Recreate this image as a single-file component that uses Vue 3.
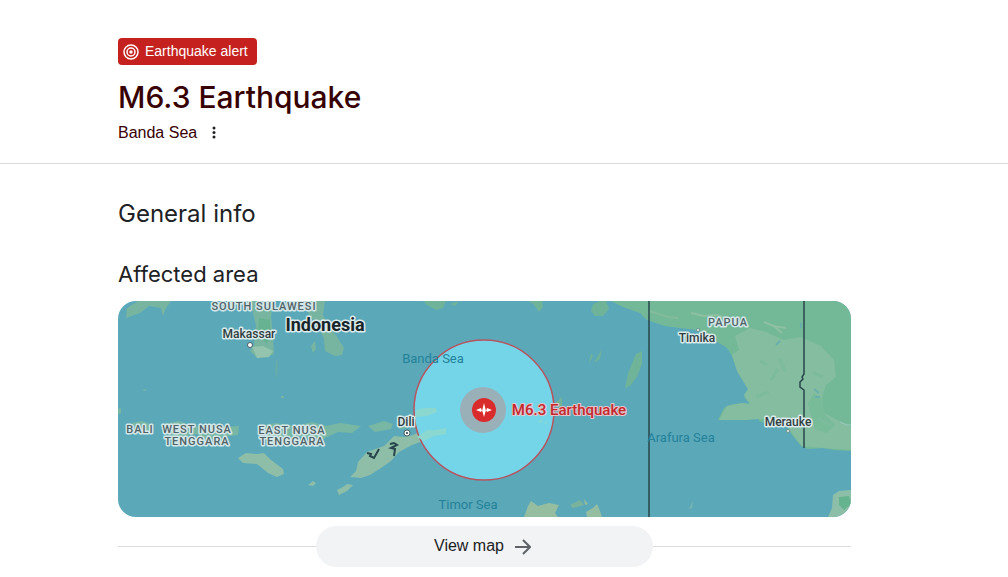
<script setup>
import { ref } from "vue";

const alert = ref({
  type: "Earthquake alert",
  title: "M6.3 Earthquake",
  place: "Banda Sea",
});

/**
 * Place names, in map units
 */
const labels = [
  { text: "SOUTH SULAWESI", x: 146, y: 9, kind: "region" },
  { text: "Makassar", x: 131, y: 37, kind: "city" },
  { text: "Indonesia", x: 207, y: 30, kind: "country" },
  { text: "Banda Sea", x: 315, y: 62, kind: "sea" },
  { text: "BALI", x: 22, y: 132, kind: "region" },
  { text: "WEST NUSA", x: 79, y: 132, kind: "region" },
  { text: "TENGGARA", x: 79, y: 144, kind: "region" },
  { text: "EAST NUSA", x: 174, y: 133, kind: "region" },
  { text: "TENGGARA", x: 174, y: 144, kind: "region" },
  { text: "Dili", x: 288, y: 125, kind: "city" },
  { text: "Timor Sea", x: 350, y: 208, kind: "sea" },
  { text: "Arafura Sea", x: 563, y: 141, kind: "sea" },
  { text: "PAPUA", x: 610, y: 25, kind: "region" },
  { text: "Timika", x: 579, y: 41, kind: "city" },
  { text: "Merauke", x: 670, y: 125, kind: "city" },
];
</script>

<template>
  <main>
    <header class="header">
      <div class="content">
        <div class="badge">
          <svg class="badge-icon" viewBox="0 0 16 16" aria-hidden="true">
            <circle cx="8" cy="8" r="7" />
            <circle cx="8" cy="8" r="4" />
            <circle cx="8" cy="8" r="1" />
          </svg>
          <span>{{ alert.type }}</span>
        </div>
        <h1>{{ alert.title }}</h1>
        <div class="place">
          <span>{{ alert.place }}</span>
          <button class="more" type="button" aria-label="More options">
            <svg viewBox="0 0 4 14" aria-hidden="true">
              <circle cx="2" cy="2" r="1.5" />
              <circle cx="2" cy="6.5" r="1.5" />
              <circle cx="2" cy="11" r="1.5" />
            </svg>
          </button>
        </div>
      </div>
    </header>

    <section class="content">
      <h2>General info</h2>
      <h3>Affected area</h3>

      <svg class="map" viewBox="0 0 733 216" role="img" aria-label="Map of the affected area">
        <rect width="733" height="216" fill="#5ba8b9" />

        <!-- Borneo and Sulawesi -->
        <g fill="#78b5a0">
          <path d="M8 17 L9 7 L17 2 L20 0 H53 L48 7 L45 15 L43 7 L31 5 L22 12 Z" />
          <path d="M133 0 H156 L153 15 L155 34 L156 53 L148 56 L139 57 L132 50 L136 44 L138 25 L135 12 Z" />
          <path d="M188 0 H207 L205 14 L212 27 L218 34 L226 47 L224 54 L217 55 L207 50 L206 38 L200 25 L191 14 Z" />
          <path d="M193 45 L197 40 L198 48 L195 52 Z" />
        </g>
        <path d="M158 58 L160 60 L159 78 L157 72 Z" fill="#66adaa" />
        <path d="M134 46 L145 45 L155 50 L151 56 L139 57 Z" fill="#94c4ad" />
        <path d="M141 17 L152 19 L153 33 L149 43 L140 34 Z" fill="#67b291" />

        <!-- Maluku islands -->
        <g fill="#6fb399">
          <path d="M305 0 H328 L325 7 L318 9 L309 4 Z M332 3 L341 0 L337 5 Z" />
          <path d="M411 0 H424 L425 6 L421 11 L416 4 Z M475 3 L482 0 H488 L491 8 L485 15 L477 15 L473 10 Z" />
          <path d="M518 53 L524 50 V63 L519 76 L512 85 L507 87 L510 72 Z" />
          <path d="M471 63 L473 52 L475 55 Z M476 62 L484 48 L482 58 Z M438 101 L444 96 V106 L439 106 Z" />
        </g>

        <!-- Lesser Sunda islands -->
        <g fill="#78b7a4">
          <path d="M0 108 L3 107 V112 L0 113 Z M14 122 L24 120 L34 124 L29 132 L22 134 Z" />
          <path d="M45 123 L61 120 L76 126 L92 123 L109 126 L121 125 L120 134 L104 136 L91 140 L78 133 L60 137 L46 132 Z" />
          <path d="M139 125 L158 122 L178 125 L194 121 L208 125 L222 122 L243 125 L234 132 L220 131 L203 139 L178 135 L159 138 L144 133 Z" />
          <path d="M250 125 L266 120 L275 123 L273 128 L257 131 Z M280 124 L291 121 L290 127 L281 128 Z" />
          <path d="M24 89 L29 88 L27 90 Z M163 95 H166 V97 H163 Z" />
        </g>
        <g fill="#8fbea8">
          <path d="M120 157 L128 152 L139 153 L146 152 L153 159 L165 168 L166 173 L159 176 L150 172 L139 163 L125 162 Z" />
          <path d="M190 184 L195 180 L198 182 L195 185 Z M219 189 L225 186 L229 183 L235 184 L229 190 L221 194 Z" />
          <path d="M232 176 L238 170 L240 161 L249 151 L266 145 L276 135 L286 136 L295 134 L304 130 L325 128 L308 139 L294 144 L281 151 L273 160 L263 167 L252 174 L243 177 Z" />
        </g>

        <!-- Australia -->
        <g fill="#95bea1">
          <path d="M406 216 L410 205 L413 200 L420 205 L431 202 L441 204 L437 212 L440 216 Z" />
          <path d="M469 216 L468 211 L475 207 L479 203 L482 210 L484 216 Z M466 198 L470 203 L467 204 Z" />
          <path d="M571 208 L575 200 L574 207 Z" fill="#79b5b2" />
        </g>
        <path d="M452 204 L462 199 L466 204 L455 207 Z" fill="#79b39b" />
        <path d="M710 216 L714 207 L715 194 L721 190 L733 189 V216 Z" fill="#8dbfa8" />
        <path d="M721 196 L731 195 L733 203 L726 209 L721 204 Z" fill="#65b48f" />

        <!-- New Guinea -->
        <path
          d="M493 0 H733 V150 L716 149 L705 147 L690 148 L683 145 L674 134 L669 124 L642 121 L638 114 L629 119 L600 119 L606 107 L611 104 L624 102 L632 103 L626 96 L630 88 L620 72 L614 55 L609 47 L596 39 L579 29 L562 27 L547 25 L529 19 L522 12 L505 6 Z"
          fill="#73b997"
        />
        <path
          d="M617 35 L632 27 L648 31 L665 39 L683 36 L703 45 L716 59 L718 76 L708 84 L704 96 L706 112 L733 126 V149 L704 147 L684 145 L672 130 L666 118 L641 118 L629 119 L601 119 L609 105 L624 102 L632 103 L626 94 L630 88 L619 70 L614 54 L621 49 Z"
          fill="#84bda0"
        />
        <path d="M690 102 L696 92 L704 98 L706 112 L717 124 L709 132 L697 128 Z" fill="#78bb99" />
        <g fill="none" stroke="#8fc0a3" stroke-width="2">
          <path d="M573 12 L586 15 L599 14 L613 19 L626 19 M646 21 L656 25 L664 32 M655 25 L668 27" />
          <path d="M531 10 L550 16 L560 17" stroke="#83bc9c" />
        </g>
        <path
          d="M653 79 L660 68 M662 58 L667 70 M642 60 L649 64 M695 72 L705 76 M638 96 L651 91 M700 117 L714 124"
          fill="none"
          stroke="#7dbb9d"
          stroke-width="3"
        />
        <path
          d="M658 44 L662 40 M696 88 L701 92 M683 22 V27 M697 96 L702 96"
          fill="none"
          stroke="#69afae"
          stroke-width="2"
        />
        <path d="M722 121 L729 124 H733" fill="none" stroke="#9dc9bb" />

        <!-- Borders -->
        <g fill="none" stroke="#27464b" stroke-width="1.5">
          <path d="M531 0 V216" />
          <path d="M686 0 V73 L684 76 L685 78 L682 81 V86 L686 89 V147" />
          <path
            d="M249 152 L253 153 L252 155 L256 157 L261 148 M272 143 L276 142 L279 144 L273 147 L277 148 L276 155"
            stroke-width="2"
          />
        </g>

        <!-- Affected circle -->
        <circle cx="366" cy="109" r="70" fill="#74d5e8" stroke="#b9535f" stroke-width="1.5" />
        <g fill="#8bd8d1">
          <path d="M298 109 L306 107 L318 107 L319 111 L309 115 L297 116 Z" />
          <path d="M299 136 L309 129 L318 129 L328 127 L328 133 L316 135 L306 140 Z" />
          <path d="M420 121 L425 118 L423 122 Z M426 122 L430 119 L428 123 Z" />
        </g>
        <circle cx="365" cy="109" r="23" fill="#9ab0b9" />
        <circle cx="366" cy="109" r="12" fill="#d92b2c" />
        <path
          d="M358 109 L363 107 L364 110 L366 102 L368 110 L369 107 L374 109 L369 111 L368 109 L366 116 L364 109 L363 111 Z"
          fill="#fff"
        />

        <g fill="#fff" stroke="#4c5c60">
          <circle cx="132" cy="44" r="2.5" />
          <circle cx="289" cy="132" r="3" />
          <circle cx="580" cy="29" r="1.5" stroke="#6c9186" />
          <circle cx="670" cy="130" r="1.5" stroke="#6c9186" />
        </g>
        <circle cx="289" cy="132" r="1" fill="#26383c" />

        <text
          v-for="(label, index) in labels"
          :key="index"
          :x="label.x"
          :y="label.y"
          :class="['label', label.kind]"
        >
          {{ label.text }}
        </text>
        <text x="451" y="114" class="label quake">{{ alert.title }}</text>
      </svg>

      <div class="view-row">
        <button class="view-map" type="button">
          <span>View map</span>
          <svg viewBox="0 0 16 16" aria-hidden="true">
            <path d="M0 8 H15 M8 1 L15 8 L8 15" />
          </svg>
        </button>
      </div>
    </section>
  </main>
</template>

<style>
body {
  background-color: #fff;
}
</style>

<style scoped>
main {
  color: #202124;
  font-family: "Liberation Sans", Arial, sans-serif;
  font-size: 16px;
}

.content {
  max-width: 733px;
  padding: 0 118px;
}

.header {
  padding: 38px 0 20px;
  border-bottom: 1px solid #dadce0;
  color: #370003;
}

.badge {
  display: inline-flex;
  align-items: center;
  gap: 6px;
  box-sizing: border-box;
  height: 27px;
  padding: 0 9px 2px 5px;
  border-radius: 4px;
  background-color: #c5221f;
  color: #fff;
  font-size: 14px;
}

.badge-icon {
  width: 16px;
  height: 16px;
  margin-top: 2px;
  fill: none;
  stroke: #fff;
  stroke-width: 1.5;
}

h1,
h2,
h3 {
  margin: 0;
  font-family: "Google Sans", Inter, sans-serif;
  font-weight: 400;
}

h1 {
  padding-top: 12px;
  font-size: 30px;
  font-weight: 500;
  line-height: 40px;
}

.place {
  display: flex;
  align-items: center;
  gap: 11px;
  padding-top: 6px;
  line-height: 20px;
}

.more {
  display: flex;
  justify-content: center;
  width: 12px;
  padding: 0;
  border: 0;
  background: none;
  cursor: pointer;
}

.more svg {
  width: 4px;
  height: 14px;
  fill: #202124;
}

h2 {
  padding-top: 32px;
  font-size: 24px;
  line-height: 36px;
}

h3 {
  padding: 28px 0 13px;
  font-size: 22px;
  line-height: 28px;
}

.map {
  display: block;
  width: 100%;
  border-radius: 18px;
}

.label {
  font-family: Roboto, sans-serif;
  text-anchor: middle;
  paint-order: stroke;
  stroke-linejoin: round;
}

.region {
  fill: #4f6266;
  stroke: #d5e8e9;
  stroke-width: 3px;
  font-size: 11px;
  font-weight: 500;
  letter-spacing: 1px;
}

.city {
  fill: #2f3d41;
  stroke: #dcebeb;
  stroke-width: 3px;
  font-size: 12px;
  font-weight: 500;
}

.country {
  fill: #17252a;
  stroke: #dcebeb;
  stroke-width: 3px;
  font-size: 18px;
  font-weight: 700;
}

.sea {
  fill: #23829a;
  font-size: 13px;
}

.quake {
  fill: #c5272d;
  stroke: #e6c6ca;
  stroke-width: 2px;
  font-size: 15px;
  font-weight: 500;
}

.view-row {
  display: flex;
  align-items: center;
  padding: 9px 0;
}

.view-row::before,
.view-row::after {
  content: "";
  flex: 1;
  height: 1px;
  background-color: #dadce0;
}

.view-map {
  display: flex;
  align-items: center;
  justify-content: center;
  gap: 11px;
  width: 46%;
  height: 41px;
  padding: 0 4px 2px 0;
  border: 0;
  border-radius: 21px;
  background-color: #f1f3f4;
  color: #202124;
  font: inherit;
  cursor: pointer;
}

.view-map svg {
  width: 16px;
  height: 16px;
  margin-top: 2px;
  fill: none;
  stroke: #5f6368;
  stroke-width: 2;
}
</style>
